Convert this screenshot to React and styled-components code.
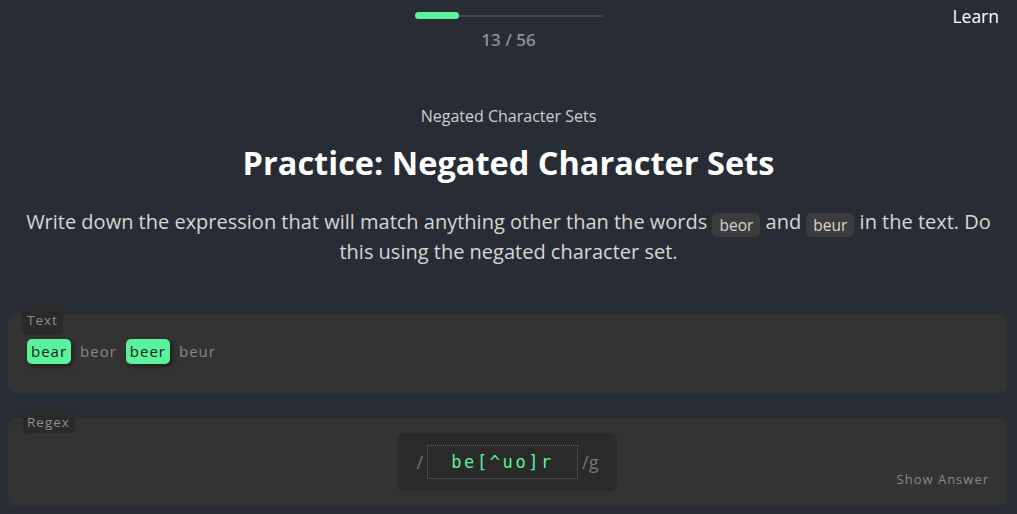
import React from "react";
import styled, { createGlobalStyle } from "styled-components";

const GlobalStyle = createGlobalStyle`
  body {
    margin: 0;
    background: #282c34;
    font-family: "Open Sans", "Noto Sans", sans-serif;
    color: #ffffff;
  }
`;

const Header = styled.header`
  display: grid;
  grid-template-columns: 1fr 188px 1fr;
  padding: 5px 18px 0 18px;
`;

const ProgressCol = styled.div`
  grid-column: 2;
  display: flex;
  flex-direction: column;
  align-items: center;
  padding-top: 7px;
`;

const Track = styled.div`
  position: relative;
  width: 100%;
  height: 7px;
  display: flex;
  align-items: center;
  &::before {
    content: "";
    position: absolute;
    left: 0;
    right: 0;
    height: 2px;
    background: #44474d;
  }
`;

const Fill = styled.div`
  position: relative;
  height: 7px;
  border-radius: 4px;
  background: #5af29b;
`;

const Counter = styled.div`
  margin-top: 10px;
  font-size: 17px;
  line-height: 22px;
  font-weight: 600;
  color: #8b9099;
`;

const LearnLink = styled.a`
  justify-self: end;
  font-size: 17.5px;
  line-height: 22px;
  color: #ffffff;
  text-decoration: none;
`;

const Intro = styled.section`
  display: flex;
  flex-direction: column;
  align-items: center;
  text-align: center;
  padding: 54px 16px 0;
`;

const Subtitle = styled.div`
  font-size: 16px;
  line-height: 22px;
  color: #d0d0d0;
`;

const Title = styled.h1`
  margin: 15px 0 0;
  font-size: 32.5px;
  line-height: 42px;
  font-weight: 700;
  color: #ffffff;
`;

const Description = styled.p`
  margin: 23px 0 0;
  font-size: 20px;
  line-height: 30px;
  color: #d6d6d6;
`;

const Code = styled.code`
  display: inline-block;
  font-family: "Open Sans", sans-serif;
  font-size: 15.5px;
  line-height: 24px;
  vertical-align: -2px;
  background: #3c3c3c;
  border-radius: 6px;
  padding: 0 7px;
  color: #d6d6d6;
`;

const Panel = styled.section`
  display: flex;
  flex-direction: column;
  margin: ${({ $top }) => $top}px 10px 0 8px;
  background: #333333;
  border-radius: 8px;
  padding: 0 18px ${({ $bottom }) => $bottom}px;
  min-height: ${({ $height }) => $height}px;
  box-sizing: border-box;
`;

const Label = styled.div`
  align-self: flex-start;
  margin: -7px 0 0 -4px;
  padding: ${({ $pad }) => $pad}px 5px;
  background: #2a2a2a;
  border-radius: 6px;
  font-size: 13.5px;
  line-height: 15px;
  letter-spacing: 1px;
  color: #8f8f8f;
`;

const Words = styled.div`
  display: flex;
  align-items: center;
  gap: 9px;
  margin-top: 4px;
  padding-left: 1px;
`;

const Word = styled.span`
  font-size: 15px;
  line-height: 25px;
  letter-spacing: 1px;
  padding: 0 ${({ $match }) => ($match ? "4px" : "0")};
  border-radius: 5px;
  background: ${({ $match }) => ($match ? "#5af29b" : "transparent")};
  color: ${({ $match }) => ($match ? "#1e1e1e" : "#8a8a8a")};
  box-shadow: ${({ $match }) => ($match ? "2px 2px 4px rgba(0,0,0,0.45)" : "none")};
`;

const RegexRow = styled.div`
  display: grid;
  grid-template-columns: 1fr auto 1fr;
`;

const RegexBox = styled.div`
  grid-column: 2;
  display: flex;
  align-items: center;
  gap: 4px;
  height: 58px;
  padding: 0 19px;
  background: #2a2a2a;
  border-radius: 7px;
  color: #777777;
`;

const Slash = styled.span`
  font-family: "Open Sans", sans-serif;
  font-size: 18px;
`;

const RegexInput = styled.div`
  width: 151px;
  height: 34px;
  box-sizing: border-box;
  border: 1px dotted #666666;
  display: flex;
  align-items: center;
  justify-content: center;
  font-family: "DejaVu Sans Mono", monospace;
  font-size: 17px;
  letter-spacing: 2.6px;
  color: #5af29b;
`;

const ShowAnswer = styled.button`
  justify-self: end;
  align-self: end;
  margin-bottom: 3px;
  background: none;
  border: none;
  padding: 0;
  font-family: "Open Sans", sans-serif;
  font-size: 13px;
  letter-spacing: 1px;
  color: #8a8a8a;
  cursor: pointer;
`;

const words = [
  { text: "bear", match: true },
  { text: "beor", match: false },
  { text: "beer", match: true },
  { text: "beur", match: false },
];

export default function App() {
  const done = 13;
  const total = 56;
  return (
    <>
      <GlobalStyle />
      <Header>
        <ProgressCol>
          <Track>
            <Fill style={{ width: `${Math.round((done / total) * 188)}px` }} />
          </Track>
          <Counter>
            {done} / {total}
          </Counter>
        </ProgressCol>
        <LearnLink href="#">Learn</LearnLink>
      </Header>

      <Intro>
        <Subtitle>Negated Character Sets</Subtitle>
        <Title>Practice: Negated Character Sets</Title>
        <Description>
          Write down the expression that will match anything other than the words <Code>beor</Code> and{" "}
          <Code>beur</Code> in the text. Do this using the negated character set.
        </Description>
      </Intro>

      <Panel $top={46} $height={80} $bottom={10}>
        <Label $pad={7}>Text</Label>
        <Words>
          {words.map((w) => (
            <Word key={w.text} $match={w.match}>
              {w.text}
            </Word>
          ))}
        </Words>
      </Panel>

      <Panel $top={25} $height={88} $bottom={15}>
        <Label $pad={3.5}>Regex</Label>
        <RegexRow>
          <RegexBox>
            <Slash>/</Slash>
            <RegexInput>be[^uo]r</RegexInput>
            <Slash>/g</Slash>
          </RegexBox>
          <ShowAnswer>Show Answer</ShowAnswer>
        </RegexRow>
      </Panel>
    </>
  );
}
